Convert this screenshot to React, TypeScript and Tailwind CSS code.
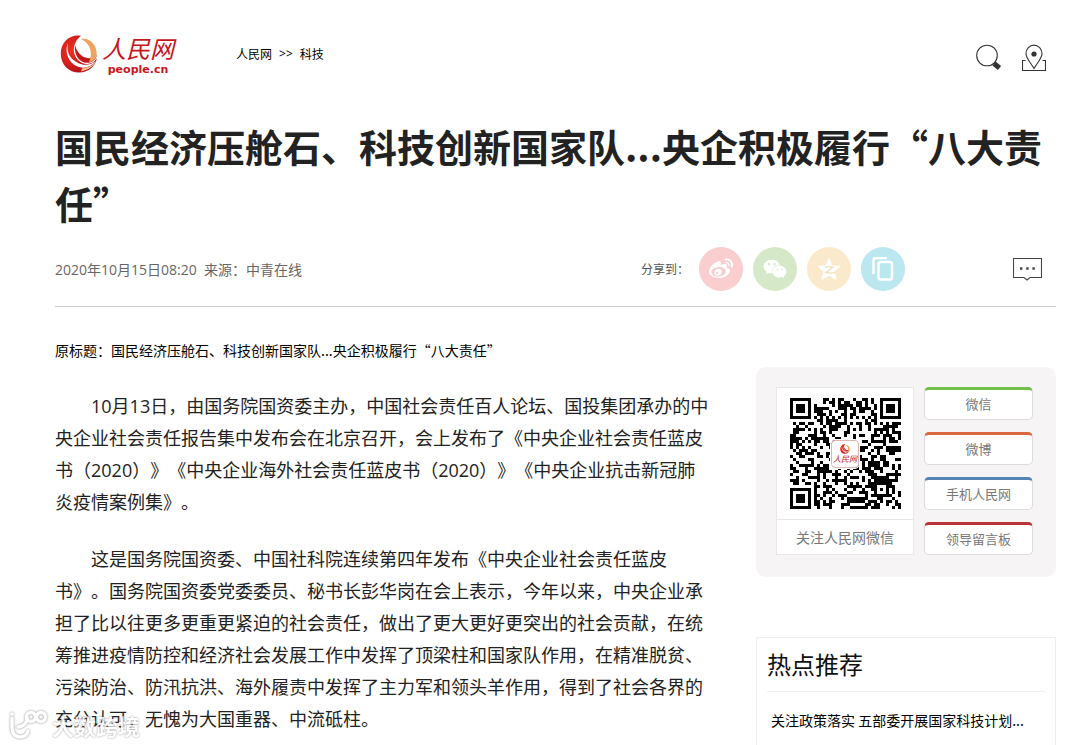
import React from 'react';
import { FaWeibo, FaWeixin } from 'react-icons/fa';

interface SideLink {
  label: string;
  border: string;
}

const sideLinks: SideLink[] = [
  { label: '微信', border: 'border-t-[#72bf4b]' },
  { label: '微博', border: 'border-t-[#d9673f]' },
  { label: '手机人民网', border: 'border-t-[#5583b3]' },
  { label: '领导留言板', border: 'border-t-[#b93538]' },
];

const hotNews = ['关注政策落实 五部委开展国家科技计划...'];

const paragraphs = [
  '10月13日，由国务院国资委主办，中国社会责任百人论坛、国投集团承办的中央企业社会责任报告集中发布会在北京召开，会上发布了《中央企业社会责任蓝皮书（2020）》《中央企业海外社会责任蓝皮书（2020）》《中央企业抗击新冠肺炎疫情案例集》。',
  '这是国务院国资委、中国社科院连续第四年发布《中央企业社会责任蓝皮书》。国务院国资委党委委员、秘书长彭华岗在会上表示，今年以来，中央企业承担了比以往更多更重更紧迫的社会责任，做出了更大更好更突出的社会贡献，在统筹推进疫情防控和经济社会发展工作中发挥了顶梁柱和国家队作用，在精准脱贫、污染防治、防汛抗洪、海外履责中发挥了主力军和领头羊作用，得到了社会各界的充分认可，无愧为大国重器、中流砥柱。',
];

const QR_SIZE = 37;

// Is the module at (x, y) dark?
const isDark = (x: number, y: number): boolean => {
  const corners = [[0, 0], [QR_SIZE - 7, 0], [0, QR_SIZE - 7]];
  for (const [cx, cy] of corners) {
    const d = Math.max(Math.abs(x - cx - 3), Math.abs(y - cy - 3));
    if (d <= 4) return d === 3 || d <= 1;
  }
  const a = Math.max(Math.abs(x - 30), Math.abs(y - 30));
  if (a <= 2) return a !== 1;
  if (x === 6) return y % 2 === 0;
  if (y === 6) return x % 2 === 0;
  let h = (x * 374761393 + y * 668265263) | 0;
  h = Math.imul(h ^ (h >>> 13), 1274126177);
  return ((h ^ (h >>> 16)) & 1) === 1;
};

const qrPath = Array.from({ length: QR_SIZE * QR_SIZE }, (_, i) => [i % QR_SIZE, Math.floor(i / QR_SIZE)])
  .filter(([x, y]) => isDark(x, y))
  .map(([x, y]) => `M${x} ${y}h1v1h-1z`)
  .join('');

const Globe: React.FC<{ className?: string; id: string }> = ({ className, id }) => (
  <svg className={className} viewBox="0 0 38 38" aria-hidden="true">
    <defs>
      <radialGradient id={id} cx="30%" cy="40%" r="70%">
        <stop offset="0" stopColor="#e8331f" />
        <stop offset="0.5" stopColor="#d81f1c" />
        <stop offset="1" stopColor="#a50f14" />
      </radialGradient>
    </defs>
    <path fill={`url(#${id})`} d="M21 .8C9 -1 .5 8 .8 19C1 30 9 37.500 19 37.500C28 37.500 35 32 37 23C33 30 24 31 18 25C12 19 12 8 21 .8Z" />
    <path fill="#fff" d="M8 8C4 17 9 29 19 32C26 34 32 31 36 26C31 30 24 31 18 28C10 24 6 17 8 8Z" />
    <path fill="#c5161b" d="M15 10C14 17 17 25 24 27.500C31 29 36 25 37 20C33 24 27 24 22 21C18 18 16 14 15 10Z" />
    <path fill="#f0a45c" d="M21 4C30 2 38 11 36.500 21C35 25 32 27 29 27C33 19 31 9 21 4Z" />
    <path fill="#f6c08a" d="M21 36.500C28 35 34 31 36 27C32 31 27 33 22 33.500Z" />
  </svg>
);

const Header: React.FC = () => (
  <header className="flex h-[108px] items-center pr-[10px] pl-[5px]">
    <a href="#" aria-label="人民网" className="flex w-[115px] items-center gap-1">
      <Globe id="globe" className="h-[38px] w-[38px] shrink-0" />
      <span className="flex flex-col items-center text-[#c9151e]">
        <span className="text-[24px] leading-[32px] whitespace-nowrap italic">人民网</span>
        <span className="font-['DejaVu_Sans'] text-[11px] leading-[12px] font-bold">people.cn</span>
      </span>
    </a>
    <nav className="ml-[61px] flex gap-[7px] text-[12px] text-black">
      <a href="#">人民网</a>
      <span className="font-['Open_Sans']">&gt;&gt;</span>
      <a href="#">科技</a>
    </nav>
    <div className="ml-auto flex items-center gap-5 pt-2">
      <button type="button" aria-label="搜索">
        <svg className="h-[28px] w-[26px]" viewBox="0 0 26 28" fill="none" stroke="#333">
          <circle cx="11" cy="11.500" r="10.300" strokeWidth="1.100" />
          <path d="M18 19.500L23.500 24" strokeWidth="5" />
        </svg>
      </button>
      <button type="button" aria-label="地方频道">
        <svg className="h-[28px] w-[24px]" viewBox="0 0 24 28" fill="none" stroke="#333" strokeWidth="1.100">
          <path d="M12 24.500C9 19 4 14.500 4 9.500A8 8.400 0 0 1 20 9.500C20 14.500 15 19 12 24.500Z" />
          <circle cx="12" cy="10" r="2.600" fill="#333" stroke="none" />
          <path d="M3.500 16.500H.5V26.500H23.500V16.500H20.500" />
        </svg>
      </button>
    </div>
  </header>
);

const ShareBar: React.FC = () => (
  <div className="flex items-center gap-[10px]">
    <span className="text-[12px] text-[#555]">分享到：</span>
    <button type="button" aria-label="微博" className="flex h-11 w-11 items-center justify-center rounded-full bg-[#facdce] text-white">
      <FaWeibo className="h-6 w-6" />
    </button>
    <button type="button" aria-label="微信" className="flex h-11 w-11 items-center justify-center rounded-full bg-[#d5e9c8] text-white">
      <FaWeixin className="h-6 w-6" />
    </button>
    <button type="button" aria-label="QQ空间" className="flex h-11 w-11 items-center justify-center rounded-full bg-[#faeacb] text-white">
      <svg className="h-6 w-6" viewBox="0 0 24 24">
        <path fill="#fff" stroke="#fff" strokeLinejoin="round" d="M12 1.5L15 8.700L23 9.400L17 14.600L19 22.300L12 18.200L5 22.300L7 14.600L1 9.400L9 8.700Z" />
        <path fill="none" stroke="#f7dfb0" strokeWidth="1.300" d="M8 10.200C11 9.700 14 9.700 16 10.200L9 15.600C12 16.200 15 16.200 18 15.400" />
      </svg>
    </button>
    <button type="button" aria-label="复制链接" className="flex h-11 w-11 items-center justify-center rounded-full bg-[#bae7f0] text-white">
      <svg className="h-6 w-6" viewBox="0 0 24 24" fill="none" stroke="#fff">
        <path strokeWidth="2.500" d="M2.500 17V3Q2.500 .9 5 .9H16" />
        <rect strokeWidth="2.500" x="7.500" y="5" width="13.500" height="17.500" rx="2" />
      </svg>
    </button>
  </div>
);

const Sidebar: React.FC = () => (
  <aside className="w-[300px] shrink-0">
    <div className="flex h-[210px] items-start gap-[10px] rounded-[10px] bg-[#f6f4f5] p-5">
      <div className="w-[138px] border border-[#e8e8e8] bg-white">
        <div className="relative flex h-[131px] items-center justify-center">
          <svg className="h-[111px] w-[111px]" viewBox="0 0 37 37" shapeRendering="crispEdges" role="img" aria-label="二维码">
            <path d={qrPath} fill="#000" />
          </svg>
          <div className="absolute flex h-[28px] w-[28px] flex-col items-center justify-center rounded-[4px] border border-[#e0b4b4] bg-white outline-1 outline-white">
            <Globe id="globe-small" className="h-[10px] w-[10px]" />
            <span className="text-[8px] leading-[10px] whitespace-nowrap text-[#c9151e] italic">人民网</span>
          </div>
        </div>
        <p className="border-t border-[#e8e8e8] text-center text-[14px] leading-[34px] text-[#777]">关注人民网微信</p>
      </div>
      <ul className="flex w-[109px] flex-col gap-3">
        {sideLinks.map((link) => (
          <li key={link.label}>
            <a
              href="#"
              className={`block h-[33px] rounded-[5px] border border-t-3 border-[#dcdcdc] bg-white text-center text-[13px] leading-[28px] text-[#777] ${link.border}`}
            >
              {link.label}
            </a>
          </li>
        ))}
      </ul>
    </div>
    <section className="mt-[60px] h-[300px] border border-[#eee] px-[10px]">
      <h2 className="border-b border-[#eee] pt-2 pb-[9px] text-[24px] leading-[36px] text-[#111]">热点推荐</h2>
      <ul className="px-1 pt-3">
        {hotNews.map((item) => (
          <li key={item} className="text-[14px] leading-[32px] whitespace-nowrap text-black">
            <a href="#">{item}</a>
          </li>
        ))}
      </ul>
    </section>
  </aside>
);

const Watermark: React.FC = () => (
  <div className="pointer-events-none fixed bottom-1 left-2 flex items-center gap-1 opacity-85">
    <svg className="h-[32px] w-[40px] drop-shadow-[0_0_1px_#777]" viewBox="0 0 40 32" fill="none" stroke="#fff" strokeWidth="3.500" strokeLinecap="round">
      <path d="M4 9V19C4 25 8 28 12 28C16 28 19 26 20 22" />
      <path d="M4 5V5.200" />
      <path d="M10 18C15 18 19 14 19 9" />
      <circle cx="23" cy="8" r="4.500" />
      <circle cx="33" cy="8" r="4.500" />
    </svg>
    <span className="text-[22px] leading-[32px] font-bold text-white [text-shadow:0_0_2px_#777]">大数跨境</span>
  </div>
);

const App: React.FC = () => {
  return (
    <div className="h-screen overflow-hidden bg-white pr-[21px] pl-[55px] font-['Noto_Sans_CJK_SC',sans-serif] [text-spacing-trim:space-all]" lang="zh-CN">
      <Header />
      <main>
        <h1 className="pt-[9px] pb-[3px] text-[38px] leading-[57px] font-bold text-[#222]">
          国民经济压舱石、科技创新国家队...央企积极履行“八大责任”
        </h1>
        <div className="flex items-center border-b border-[#ccc] pt-[13px] pb-[15px]">
          <p className="flex-1 font-['Open_Sans','Noto_Sans_CJK_SC',sans-serif] text-[14px] text-[#666]">
            2020年10月15日08:20&nbsp; <a href="#">来源：中青在线</a>
          </p>
          <ShareBar />
          <button type="button" aria-label="评论" className="mr-[14px] ml-[108px]">
            <svg className="h-[24px] w-[29px]" viewBox="0 0 29 24" fill="none" stroke="#444" strokeWidth="1.100">
              <path d="M.500 1.500H28.500V20.500H17L14 23L11 20.500H.500Z" />
              <path d="M7 11.500h2.400M13.200 11.500h2.400M19.400 11.500h2.400" strokeWidth="2.400" />
            </svg>
          </button>
        </div>
        <p className="pt-[27px] pb-px text-[14px] leading-[32px] text-black">
          原标题：国民经济压舱石、科技创新国家队...央企积极履行“八大责任”
        </p>
        <div className="flex gap-[45px]">
          <article className="min-w-0 flex-1 pt-[23px] font-['Open_Sans','Noto_Sans_CJK_SC',sans-serif] text-[18px] leading-[32px] text-[#222]">
            {paragraphs.map((text) => (
              <p key={text} className="mb-[25px] indent-[36px]">
                {text}
              </p>
            ))}
          </article>
          <Sidebar />
        </div>
      </main>
      <Watermark />
    </div>
  );
};

export default App;
